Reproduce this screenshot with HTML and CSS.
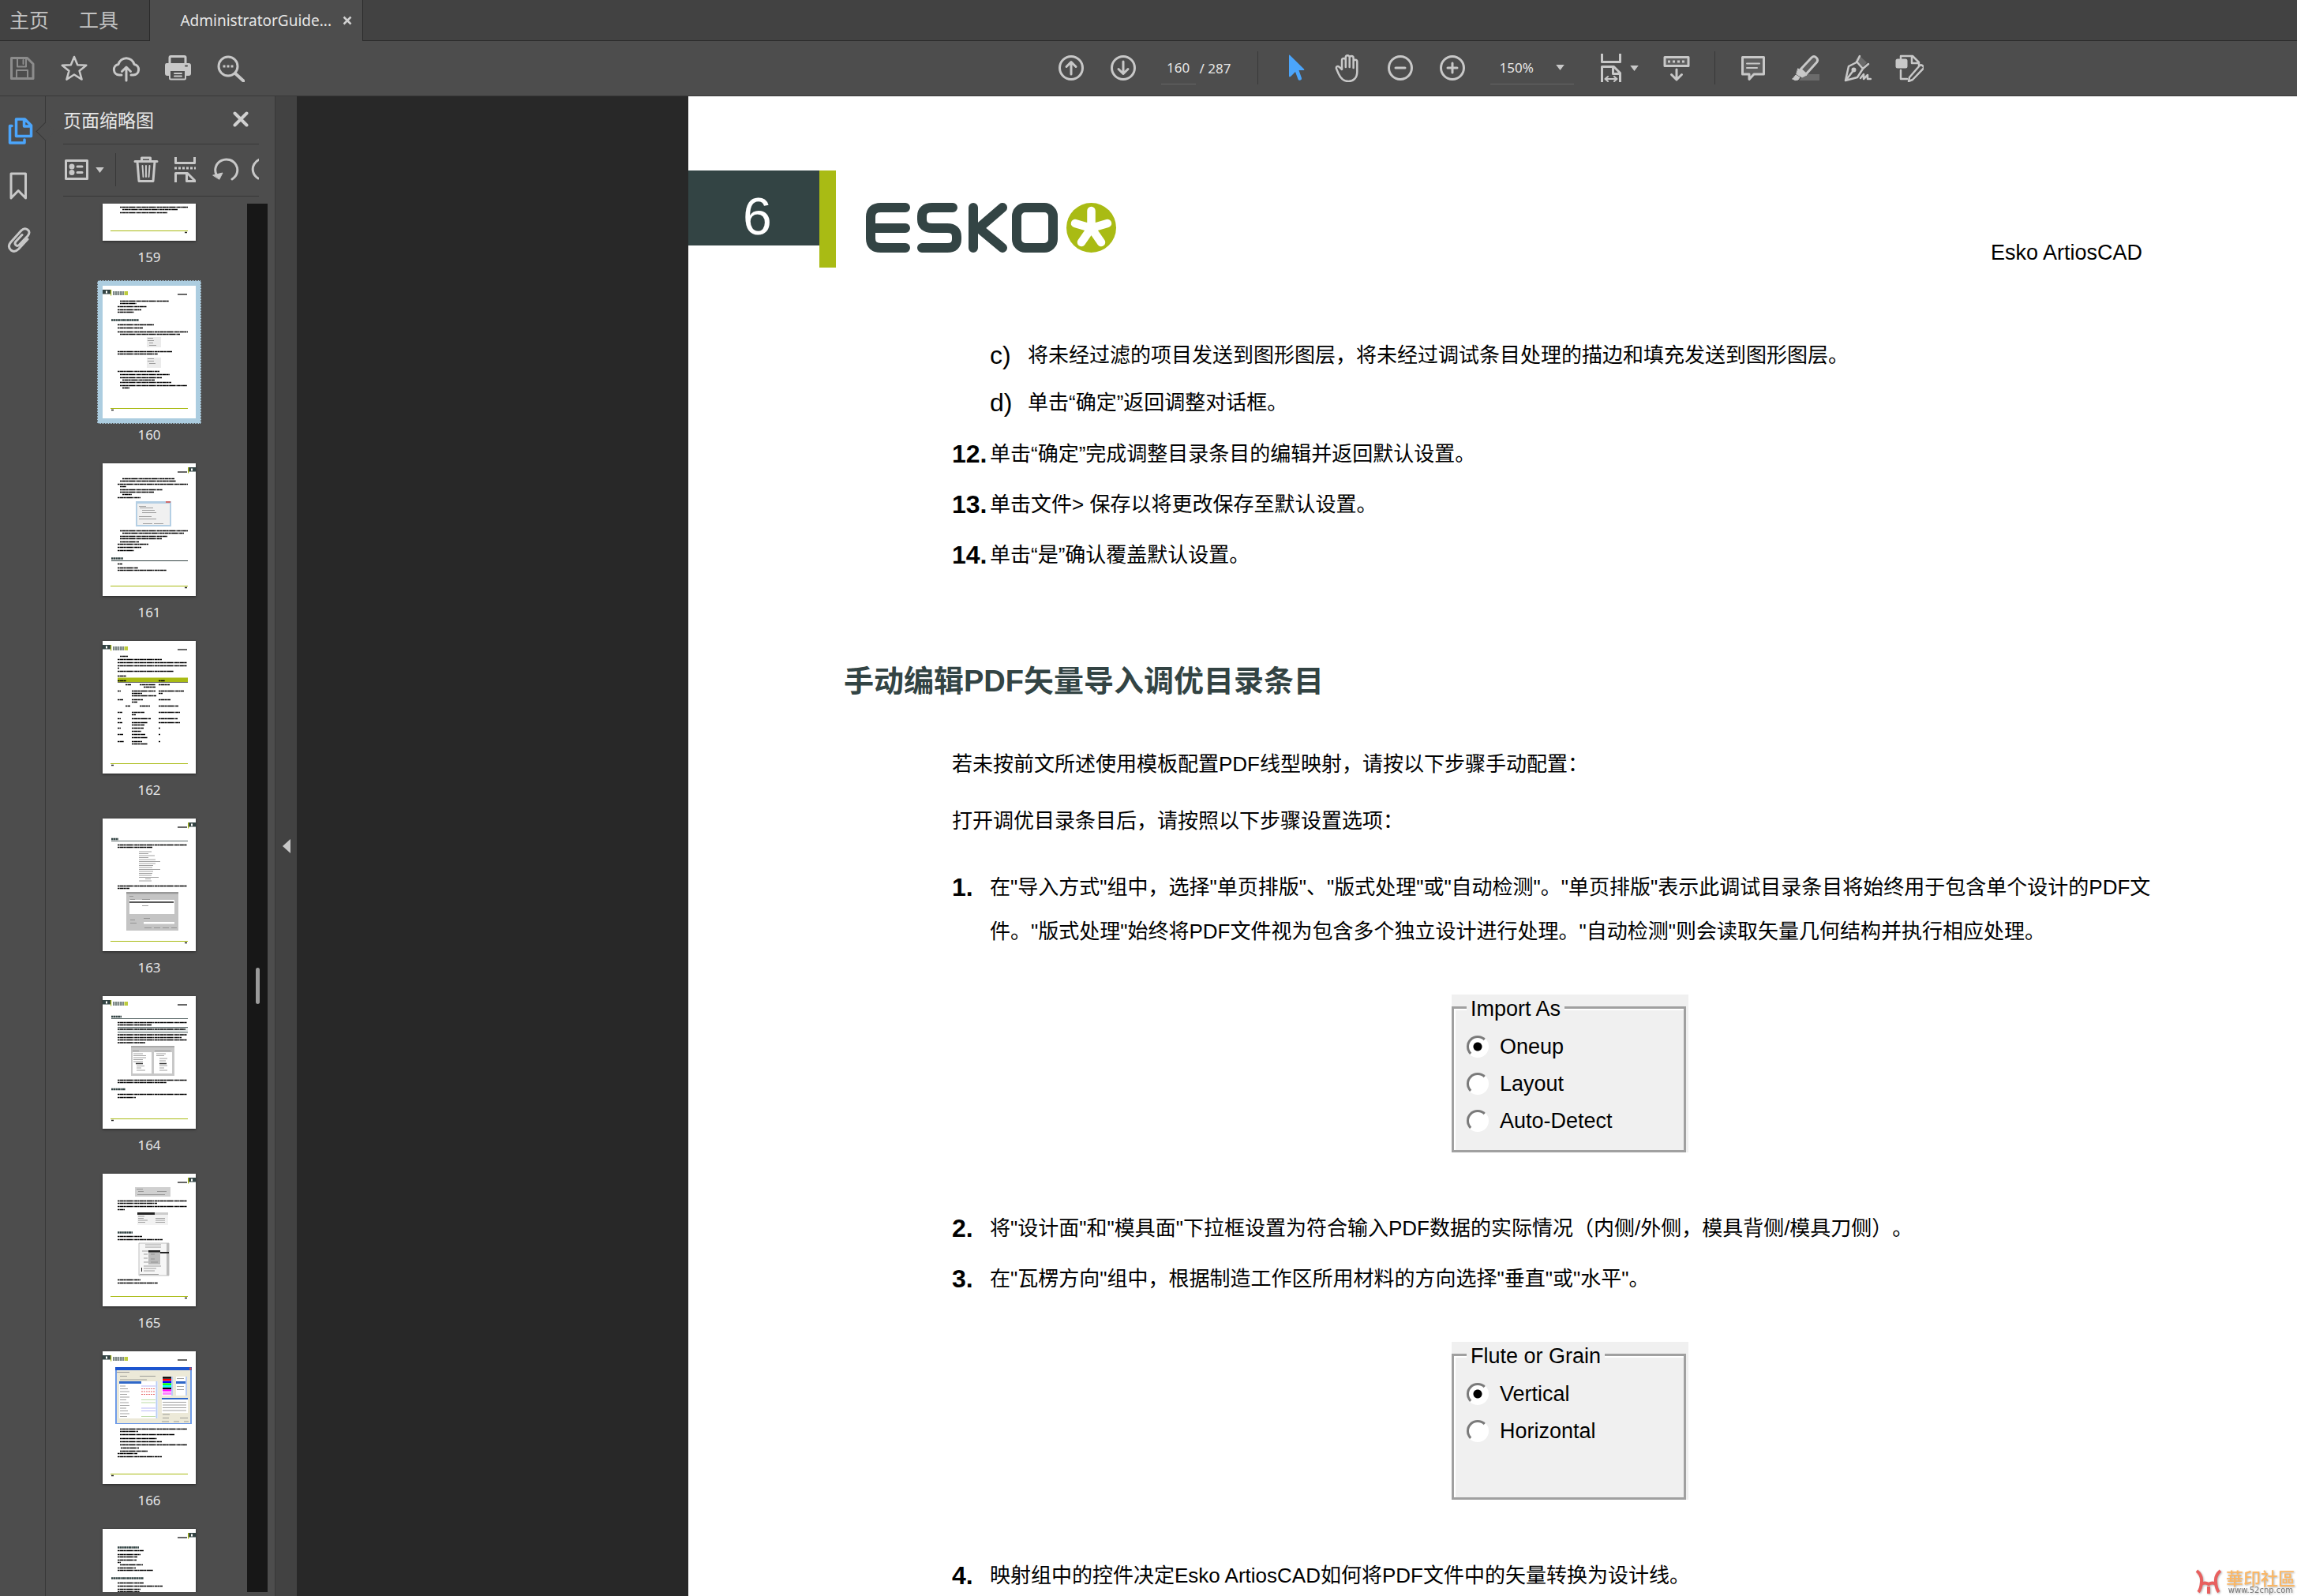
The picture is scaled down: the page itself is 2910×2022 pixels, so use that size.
FILE: index.html
```html
<!DOCTYPE html>
<html lang="zh-CN">
<head>
    <meta charset="UTF-8">
    <meta name="viewport" content="width=device-width, initial-scale=1.0">
    <title>AdministratorGuide</title>
    <link rel="stylesheet" href="styles.css">
</head>
<body>

    <!-- Shared thumbnail parts -->
    <svg class="defs" aria-hidden="true">
        <symbol id="head-left" viewBox="0 0 118 168">
            <path fill="#334444" d="M0 5h10v5.500H0z"/>
            <path fill="#fff" d="M4 6.500h2v3H4z"/>
            <path fill="#a9bb14" d="M10 5h1.200v7.500H10z"/>
            <path stroke="#7d8886" stroke-width="5" stroke-dasharray="2 .6 3 .5" d="M13 9.500h14"/>
            <path stroke="#bccb3c" stroke-width="5" d="M27.500 9.500H32"/>
            <path stroke="#000" stroke-width="1.200" d="M95 11h12"/>
        </symbol>
        <symbol id="head-right" viewBox="0 0 118 168">
            <path fill="#334444" d="M109 5h9v5.500h-9z"/>
            <path fill="#fff" d="M112 6.500h2v3h-2z"/>
            <path fill="#a9bb14" d="M108 5h1.200v7.500H108z"/>
            <path stroke="#000" stroke-width="1.200" d="M95 11h12"/>
        </symbol>
        <symbol id="foot-left" viewBox="0 0 118 168">
            <path stroke="#a9bb14" d="M10 155.500h98"/>
            <path stroke="#222" stroke-width="1.500" d="M11 157.500h3"/>
        </symbol>
        <symbol id="foot-right" viewBox="0 0 118 168">
            <path stroke="#a9bb14" d="M10 155.500h98"/>
            <path stroke="#222" stroke-width="1.500" d="M104 157.500h3"/>
        </symbol>
    </svg>

    <!-- Tabs -->
    <header class="tabbar">
        <nav class="menu">
            <a href="#">主页</a>
            <a href="#">工具</a>
        </nav>
        <div class="tab">
            <span>AdministratorGuide...</span>
            <button class="tab-close" aria-label="关闭标签">
                <svg width="12" height="12" viewBox="0 0 12 12"><path d="M1.500 1.500l9 9m0-9l-9 9" stroke="#d0d0d0" stroke-width="2.500"/></svg>
            </button>
        </div>
        <div class="tab-rest"></div>
    </header>

    <!-- Toolbar -->
    <div class="toolbar">
        <div class="tools">
            <button aria-label="保存" disabled>
                <svg class="icon dim" viewBox="0 0 36 36"><path d="M4.500 5.500h20l7.500 7.500v18.500h-27.500z"/><path d="M12 6v10.500h11V6M19.500 8v5M11 31V21h14v10" stroke-width="2"/></svg>
            </button>
            <button aria-label="收藏">
                <svg class="icon" viewBox="0 0 36 36"><path stroke-width="2.500" d="M18 4l4.200 10.300 11.100.5-8.700 7 3 10.800-9.600-6.100-9.600 6.100 3-10.800-8.700-7 11.100-.5z"/></svg>
            </button>
            <button aria-label="上传">
                <svg class="icon" viewBox="0 0 36 36"><path d="M12 27H9a6.800 6.800 0 0 1-1-13.500 10.300 10.300 0 0 1 20 0A6.800 6.800 0 0 1 27 27h-3M18 34V18M12.500 22.500L18 17l5.500 5.500"/></svg>
            </button>
            <button aria-label="打印">
                <svg class="icon" viewBox="0 0 36 36"><path d="M7 13V5q0-1.500 1.500-1.500h17Q27 3.500 27 5v8"/><path class="solid" stroke="none" d="M3 12h28q3 0 3 3v10q0 3-3 3h-3v-6H7v6H4q-3 0-3-3V15q0-3 2-3z"/><path d="M7 22v9q0 1.500 1.500 1.500h17q1.500 0 1.500-1.500v-9M13 25h9M13 28.500h9" stroke-width="2"/><path d="M27 15.500h2" stroke="#4d4d4d" stroke-width="2"/></svg>
            </button>
            <button aria-label="查找">
                <svg class="icon" viewBox="0 0 36 36"><circle cx="15" cy="16" r="12"/><path d="M24 25l11 10" stroke-width="4"/><path d="M8.500 16h3m2 0h3m2 0h3" stroke-linecap="butt"/></svg>
            </button>
        </div>

        <div class="tools">
            <button aria-label="上一页">
                <svg class="icon" viewBox="0 0 36 36"><circle cx="18" cy="18" r="14.500"/><path d="M18 26V11M12 16.500L18 10.500l6 6"/></svg>
            </button>
            <button aria-label="下一页">
                <svg class="icon" viewBox="0 0 36 36"><circle cx="18" cy="18" r="14.500"/><path d="M18 10v15M12 19.500l6 6 6-6"/></svg>
            </button>
            <div class="page-count">
                <input type="text" value="160" aria-label="页码">
                <span>/ 287</span>
            </div>
            <span class="sep"></span>
            <button aria-label="选择工具">
                <svg class="icon" viewBox="0 0 36 36"><path fill="#4ba5fb" stroke="none" d="M9 2.500q0-1.500 1.200-.5L28 19.500q1 1.500-1 1.500h-5.500l3.500 10q.3 2-1.500 2.500-2.300.8-3-1L17 23l-5.500 5.500Q9 30.500 9 28z"/></svg>
            </button>
            <button aria-label="抓手工具">
                <svg class="icon" viewBox="0 0 36 36"><path stroke-width="2.500" d="M10 20V8.500a2.400 2.400 0 0 1 4.800 0V17 4.800a2.400 2.400 0 0 1 4.900 0V17 5.500a2.400 2.400 0 0 1 4.900 0V18 10a2.300 2.300 0 0 1 4.700 0v13c0 8-5 12-11 12-7 0-10-4-12.500-9.500L3 19c-.8-2.800 2.200-4 4-1.800z"/></svg>
            </button>
            <button aria-label="缩小">
                <svg class="icon" viewBox="0 0 36 36"><circle cx="18" cy="18" r="14.500"/><path d="M12 18h12"/></svg>
            </button>
            <button aria-label="放大">
                <svg class="icon" viewBox="0 0 36 36"><circle cx="18" cy="18" r="14.500"/><path d="M12 18h12M18 12v12"/></svg>
            </button>
            <div class="zoom">
                <select aria-label="缩放">
                    <option>150%</option>
                </select>
                <svg class="caret" viewBox="0 0 12 8"><path d="M0 0h12L6 8z"/></svg>
            </div>
            <button class="wide" aria-label="适合宽度">
                <svg class="icon" viewBox="0 0 36 36"><path stroke-linecap="butt" d="M5.500 0v10.500h23V0M5.500 36V16.500h15l8 8V36M19.500 17v8.500h9"/><path stroke-width="2" d="M10 32h14M13 29l-3.500 3 3.500 3M21 29l3.500 3-3.500 3"/></svg>
                <svg class="caret" viewBox="0 0 12 8"><path d="M0 0h12L6 8z"/></svg>
            </button>
            <button aria-label="隐藏工具栏">
                <svg class="icon" viewBox="0 0 36 36"><path fill="#5f5f5f" d="M3 4.500h30v11H3z"/><path stroke-linecap="butt" stroke-dasharray="3 3" d="M7 10h22"/><path d="M18 20v12M11.500 26.500L18 33l6.500-6.500"/></svg>
            </button>
            <span class="sep"></span>
            <button aria-label="添加附注">
                <svg class="icon" viewBox="0 0 36 36"><path fill="#5f5f5f" d="M4.500 4.500h27v21.500H19l-6 6.500V26H4.500z"/><path stroke-width="2" d="M10 12.500h16M10 18h13"/></svg>
            </button>
            <button aria-label="高亮文本">
                <svg class="icon" viewBox="0 0 36 36"><path fill="#6b6b6b" stroke="none" d="M17 26h19v8H10z"/><path fill="#5f5f5f" d="M12 20L26 5q3-3 6 0t.5 6L19 26z"/><path class="solid" stroke-width="1" d="M9 19l11 8-6 3-7-4zM2 32l4-5 5 3-2 3q-4 2-7-1z"/></svg>
            </button>
            <button aria-label="签名">
                <svg class="icon" viewBox="0 0 36 36"><path fill="#6b6b6b" stroke="none" d="M20 2l10 9-5 6-9-9z"/><path stroke-width="2.500" d="M21 3l-4 8-10 5-4 18 15-4 7-11 7-6M17 10l8 9M4 33l10-13"/><circle class="solid" cx="13.500" cy="20.500" r="1.500"/><path stroke-width="2.500" d="M22 31l4-5v6l5-5v5h4"/></svg>
            </button>
            <button aria-label="更多工具">
                <svg class="icon" viewBox="0 0 36 36"><path stroke-width="2.500" d="M7 8V3h15l8 8v4M21 4v8h8M7 21v11h8"/><rect class="solid" x="2" y="8" width="12" height="9" rx="1"/><path fill="#4d4d4d" stroke-width="2.500" d="M18 30L31 15q2-1.500 4 .5t.500 3.500L22 33l-5 2z"/></svg>
            </button>
        </div>
    </div>

    <div class="workspace">
        <!-- Navigation rail -->
        <nav class="rail">
            <button class="active" aria-label="页面缩略图">
                <svg class="icon" viewBox="0 0 36 36"><path stroke="#4ba5fb" stroke-width="3.500" d="M13.500 3h11l8 8v13.500h-19zM23.500 4v8h8M8 11.500H5.500V33H24v-4"/></svg>
            </button>
            <button aria-label="书签">
                <svg class="icon" viewBox="0 0 36 36"><path d="M7 3h18.500v31L16.200 24.500 7 34z"/></svg>
            </button>
            <button aria-label="附件">
                <svg class="icon" viewBox="0 0 36 36"><path d="M28 17L16.500 29.500q-5 5-9.500 1.500-5-4.500-.5-10L20 6q4-4 8-1t0 8L17.500 24q-2.500 2.500-4.500.5t0-4.500l8-8.500"/></svg>
            </button>
        </nav>

        <!-- Thumbnails -->
        <aside class="panel">
            <div class="panel-head">
                <h2>页面缩略图</h2>
                <button aria-label="关闭面板">
                    <svg width="20" height="20" viewBox="0 0 20 20"><path d="M2.500 2.500l15 15m0-15l-15 15" stroke="#d0d0d0" stroke-width="4" stroke-linecap="round"/></svg>
                </button>
            </div>
            <div class="panel-tools">
                <button class="wide" aria-label="选项">
                    <svg class="icon" viewBox="0 0 36 36"><path d="M3.500 6.500h27v23h-27zM18 14h6M18 21.500h6"/><circle class="solid" cx="11" cy="14" r="2"/><circle class="solid" cx="11" cy="21.500" r="2"/></svg>
                    <svg class="caret" viewBox="0 0 12 8"><path d="M0 0h12L6 8z"/></svg>
                </button>
                <span class="sep"></span>
                <button aria-label="删除页面">
                    <svg class="icon" viewBox="0 0 36 36"><path d="M4 7.500h28M12.500 7V3h11v4M7 8l2 24.500h18L29 8"/><path stroke-width="2" d="M13.500 13l1 14M18 13v14M22.500 13l-1 14"/></svg>
                </button>
                <button aria-label="拆分页面">
                    <svg class="icon" viewBox="0 0 36 36"><path stroke-linecap="butt" d="M5.500 2v7.500h24V2M5.500 34V22.500h15l9 9V34M19.500 23v9.500h10"/><path stroke-linecap="butt" stroke-dasharray="3 2" d="M4 16h27"/></svg>
                </button>
                <button aria-label="逆时针旋转">
                    <svg class="icon" viewBox="0 0 36 36"><path d="M7 24a14 13.500 0 1 1 20 6"/><path class="solid" stroke-width="1" d="M3 25l12-3-4 8z"/></svg>
                </button>
                <button aria-label="顺时针旋转">
                    <svg class="icon" viewBox="0 0 36 36"><path d="M10 29a14 13.500 0 1 1 20-6"/></svg>
                </button>
            </div>
            <div class="thumbs">
                <ol class="thumb-list">
                    <li>
                        <svg viewBox="0 121 118 47" height="47">
                            <use href="#foot-right" width="118" height="168"/>
                            <path class="ln" d="M22 125.500h86M25 128.500h70M22 132.500h60"/>
                        </svg>
                        <span>159</span>
                    </li>
                    <li class="selected">
                        <svg viewBox="0 0 118 168" height="168">
                            <use href="#head-left"/><use href="#foot-left"/>
                            <path class="ln" d="M22 19.500h62M22 22.500h21M19 26.500h37M19 30.500h30M19 33.500h21M19 49.500h46M19 53.500h32M19 58.500h89M22 61.500h76M19 83.500h69M19 86.500h51M19 108.500h53M22 112.500h63M22 116.500h53M25 119.500h41M22 122.500h65M22 126.500h85M25 129.500h9"/>
                            <path class="hd" d="M11 43.500h35"/>
                            <path fill="#ebebeb" d="M56 65h18v13H56zM56 91h18v13H56z"/>
                            <path class="gr" d="M57 66.500h7M57 69.500h8M59 72.500h5M59 75.500h9M57 92.500h8M57 95.500h8M59 98.500h8"/>
                        </svg>
                        <span>160</span>
                    </li>
                    <li>
                        <svg viewBox="0 0 118 168" height="168">
                            <use href="#head-right"/><use href="#foot-right"/>
                            <path class="ln" d="M25 19.500h66M22 22.500h71M19 26.500h89M22 29.500h8M22 33.500h54M22 36.500h43M25 39.500h12M19 43.500h29M22 85.500h86M25 88.500h78M22 92.500h60M22 95.500h53M22 99.500h24M19 102.500h39M19 106.500h30M19 110.500h21M19 127.500h6M19 132.500h26M19 135.500h62"/>
                            <path fill="#b4cfe4" d="M42 48h45v32H42z"/>
                            <path fill="#f0f0f0" d="M44 51h41v27H44z"/>
                            <path fill="#d06a6a" d="M80 48h6v2h-6z"/>
                            <path class="gr" d="M46 54.500h9M47 56.500h17M50 59.500h16M50 62.500h18M46 67.500h16M46 70.500h22M51 76.500h12M65 76.500h12"/>
                            <path class="hd" d="M11 120.500h15"/>
                            <path stroke="#334444" d="M11 123.500h97"/>
                        </svg>
                        <span>161</span>
                    </li>
                    <li>
                        <svg viewBox="0 0 118 168" height="168">
                            <use href="#head-left"/><use href="#foot-left"/>
                            <path fill="#a9bb14" d="M19 46.500h89V52H19z"/>
                            <path stroke="#222" stroke-width=".7" d="M19 52.500h89"/>
                            <path class="ln" d="M22 19.500h10M19 23.500h56M19 27.500h88M19 31.500h88M19 34.500h2M19 38.500h71M19 44.500h11M19 50.500h11M71 50.500h8M29 55.500h7M47 55.500h20M71 55.500h14M52 58.500h15M19 63.500h4M37 63.500h30M71 63.500h32M37 66.500h13M71 66.500h5M37 69.500h31M19 74.500h7M37 74.500h14M71 74.500h15M37 77.500h7M29 82.500h6M47 82.500h13M71 82.500h25M19 90.500h6M37 90.500h16M71 90.500h27M37 93.500h5M19 98.500h4M37 98.500h24M71 98.500h24M19 103.500h6M37 103.500h20M71 103.500h27M37 106.500h16M19 110.500h4M37 110.500h15M71 110.500h2M37 114.500h12M19 118.500h7M37 118.500h17M71 118.500h2M37 122.500h20M19 127.500h8M37 127.500h13M71 127.500h2M37 130.500h20"/>
                        </svg>
                        <span>162</span>
                    </li>
                    <li>
                        <svg viewBox="0 0 118 168" height="168">
                            <use href="#head-right"/><use href="#foot-right"/>
                            <path class="hd" d="M11 26h9"/>
                            <path stroke="#334444" stroke-width=".8" d="M11 28.500h97"/>
                            <path class="ln" d="M19 33.500h88M19 36.500h44M19 85.500h88M19 88.500h15"/>
                            <path class="gr" d="M46 42h16M46 44.500h12M46 47h20M46 49.500h12M46 52h21M46 54.500h27M46 57h21M46 59.500h18M46 62h17M46 64.500h27M46 67h18M46 69.500h17M46 72h16M46 74.500h25M54 76.500h7M46 79h16"/>
                            <path fill="#c4c4c4" d="M30 93h66v49H30z"/>
                            <path fill="#999" d="M30 93h66v2.500H30z"/>
                            <path fill="#fff" d="M34 103h57v18H34zM52 131h39v2.500H52z"/>
                            <path stroke="#222" stroke-width="1.500" d="M34 106h56"/>
                            <path class="gr" d="M34 98.500h5M35 102.500h6M50 102.500h10M50 110.500h8M35 128.500h6M52 126.500h8M35 132.500h8M53 138.500h9M65 138.500h8M76 138.500h8M87 138.500h7"/>
                        </svg>
                        <span>163</span>
                    </li>
                    <li>
                        <svg viewBox="0 0 118 168" height="168">
                            <use href="#head-left"/><use href="#foot-left"/>
                            <path class="hd" d="M11 26h13"/>
                            <path fill="#e4e8e8" d="M19 39h89v7H19z"/>
                            <path stroke="#334444" stroke-width=".8" d="M11 28.500h97M19 39.500h89M19 46h89"/>
                            <path class="ln" d="M19 33.500h88M19 36.500h43M19 42h86M19 49h88M19 52.500h81M19 55.500h88M19 59h35M19 106.500h88M19 109.500h62M19 124.500h88M19 128.500h23"/>
                            <path class="hd" d="M11 118h18"/>
                            <path fill="#c8c8c8" d="M36 63h55v38H36z"/>
                            <path fill="#aaa" d="M36 63h55v2H36z"/>
                            <path fill="#fff" d="M38 71h24v27H38zM65 71h23v27H65z"/>
                            <path class="gr" d="M38 69.500h8M66 69.500h20M39 73h12M39 75.500h16M39 78h16M39 80.500h12M39 83h12M43 88.500h10M43 91h6M43 94h11M68 73h12M68 75.500h10M72 79h10M72 82h8M72 88h10M72 91h6M72 94h10"/>
                            <path stroke="#333" stroke-width="1.500" d="M42 85.500h9M72 85.500h9"/>
                        </svg>
                        <span>164</span>
                    </li>
                    <li>
                        <svg viewBox="0 0 118 168" height="168">
                            <use href="#head-right"/><use href="#foot-right"/>
                            <path fill="#d0d0d0" d="M41 17h45v12H41z"/>
                            <path class="gr" d="M43 19.500h8M45 22.500h7M69 22.500h12M44 26.500h35"/>
                            <path class="ln" d="M19 34.500h88M19 37.500h50M19 41.500h88M19 45.500h9M19 79.500h31M19 83.500h57M19 134.500h29M19 138.500h51"/>
                            <path fill="#f2f2f2" d="M44 49h39v16H44z"/>
                            <path fill="#222" d="M44 49h22v3H44z"/>
                            <path fill="#ccc" d="M66 49h17v3H66z"/>
                            <path class="gr" d="M45 54h8M45 56.500h7M45 59h12M45 61.500h9M67 56.500h12M67 59h12M67 61.500h12"/>
                            <path class="hd" d="M19 74.500h19"/>
                            <path fill="#f6f6f6" stroke="#999" stroke-width=".6" d="M46 88h38v41H46z"/>
                            <path class="gr" d="M54 90h20M54 93h20M50 98h8M52 102h5M52 107h5M52 112h12M52 117h22M52 120h16M52 123h14M47 127.500h24"/>
                            <path fill="#bbb" d="M58 97h15v18H58zM81 88h3v41h-3z"/>
                            <path fill="#222" d="M58 97h15v2.500H58zM73 99h11v2H73zM49 119h1v5h-1z"/>
                            <path class="gr" d="M61 102h5M61 108h5M61 112h9"/>
                        </svg>
                        <span>165</span>
                    </li>
                    <li>
                        <svg viewBox="0 0 118 168" height="168">
                            <use href="#head-left"/><use href="#foot-left"/>
                            <path fill="#6f9be8" d="M16 20h97v72H16z"/>
                            <path fill="#ece9d8" d="M18 24h93v67H18z"/>
                            <path fill="#1c55cf" d="M16 20h97v4H16z"/>
                            <path fill="#e05040" d="M110 20.500h2.500v3H110z"/>
                            <path fill="#fff" d="M21 38h49v47H21zM75 32h14v24H75zM93 32h14v24H93zM75 59h33v19H75z"/>
                            <path fill="#2f67c8" d="M21 38h28v3H21zM93 38h12v3H93zM75 59h33v2H75z"/>
                            <path stroke="#b8cdf5" stroke-width="2" d="M68.500 38v47M88 32v24M106 32v24"/>
                            <path class="gr" d="M18 26.500h16M22 31.500h9M47 31.500h20M22 36h34M22 44h7M22 47.500h10M22 51h12M22 54.500h9M22 58h12M22 61.500h8M22 65h11M22 68.500h12M22 72h8M22 75.500h10M22 79h12M22 82.500h9M94 34.500h9M94 44.500h9M94 48.500h9M76 64.500h30M76 68h30M76 71.500h30M76 75h30M76 80h9M76 84.500h8M98 84.500h10M75 89h9M90 89h7M103 89h6"/>
                            <path stroke="#8a8af0" stroke-width=".6" d="M49 44h18M49 72h18M49 75.500h18"/>
                            <path stroke="#e04040" stroke-width=".8" stroke-dasharray="2 1" d="M49 47.500h18M49 51h18M49 54.500h18"/>
                            <path stroke="#8fc46a" stroke-width=".6" d="M49 61.500h18M49 65h18M49 82.500h18"/>
                            <path stroke-width="2.500" stroke="#000" d="M76 33.500h11M76 47h11"/>
                            <path stroke-width="2.500" stroke="#f00" d="M76 36.200h11"/>
                            <path stroke-width="2.500" stroke="#00f" d="M76 38.900h11"/>
                            <path stroke-width="2.500" stroke="#0f0" d="M76 41.600h11"/>
                            <path stroke-width="2.500" stroke="#0ff" d="M76 44.300h11"/>
                            <path stroke-width="2.500" stroke="#f0f" d="M76 49.500h11"/>
                            <path stroke-width="3" stroke="#ff80ff" d="M76 53.500h11"/>
                            <path class="ln" d="M22 98.500h85M22 101.500h23M22 105.500h69M22 110.500h47M22 114.500h53M22 118.500h85M23 122.500h23M22 126.500h35M19 129.500h25M19 133.500h56"/>
                        </svg>
                        <span>166</span>
                    </li>
                    <li>
                        <svg viewBox="0 0 118 168" height="168">
                            <use href="#head-right"/><use href="#foot-right"/>
                            <path class="hd" d="M19 23.500h27M11 62.500h41"/>
                            <path class="ln" d="M19 27.500h33M19 32.500h29M19 35.500h25M19 39.500h24M19 42.500h4M22 45.500h29M19 49.500h23M19 52.500h45M19 68.500h33M19 72.500h57M19 76.500h29M19 79.500h28"/>
                        </svg>
                    </li>
                </ol>
                <div class="scroll-track"><div class="scroll-thumb"></div></div>
            </div>
        </aside>

        <button class="splitter" aria-label="折叠面板">
            <svg width="10" height="18" viewBox="0 0 10 18"><path fill="#c8c8c8" d="M10 0v18L0 9z"/></svg>
        </button>

        <!-- Document -->
        <main class="viewer">
            <article class="page">
                <header class="page-head">
                    <div class="chapter">6</div>
                    <div class="chapter-bar"></div>
                    <svg class="logo" width="320" height="66" viewBox="0 0 320 66" role="img" aria-label="ESKO">
                        <g fill="none" stroke="#334444" stroke-width="12" stroke-linecap="round">
                            <path d="M51 7H20Q7 7 7 19V46Q7 58 20 58H51M7 33H51"/>
                            <path d="M111 7H85Q72 7 72 18V22Q72 33 85 33H104Q116 33 116 44V47Q116 58 104 58H72"/>
                            <path d="M137 7V58M174 7L144 33L174 58"/>
                            <rect x="192" y="7" width="46" height="51" rx="11"/>
                        </g>
                        <circle cx="286.500" cy="32.500" r="31.500" fill="#a9bb14"/>
                        <path fill="none" stroke="#fff" stroke-width="10.500" stroke-linecap="round" d="M286.500 33V11M286.500 33L266 27M286.500 33L307 27M286.500 33L274 51M286.500 33L299 51"/>
                    </svg>
                    <span class="product">Esko ArtiosCAD</span>
                </header>

                <div class="content">
                    <ol class="sub steps">
                        <li><span class="num">c)</span><p>将未经过滤的项目发送到图形图层，将未经过调试条目处理的描边和填充发送到图形图层。</p></li>
                        <li><span class="num">d)</span><p>单击“确定”返回调整对话框。</p></li>
                    </ol>
                    <ol class="steps">
                        <li><span class="num">12.</span><p>单击“确定”完成调整目录条目的编辑并返回默认设置。</p></li>
                        <li><span class="num">13.</span><p>单击文件&gt; 保存以将更改保存至默认设置。</p></li>
                        <li><span class="num">14.</span><p>单击“是”确认覆盖默认设置。</p></li>
                    </ol>

                    <h1>手动编辑PDF矢量导入调优目录条目</h1>
                    <p class="intro">若未按前文所述使用模板配置PDF线型映射，请按以下步骤手动配置：</p>
                    <p class="intro">打开调优目录条目后，请按照以下步骤设置选项：</p>

                    <ol class="steps main-steps">
                        <li>
                            <span class="num">1.</span>
                            <div>
                                <p>在"导入方式"组中，选择"单页排版"、"版式处理"或"自动检测"。"单页排版"表示此调试目录条目将始终用于包含单个设计的PDF文件。"版式处理"始终将PDF文件视为包含多个独立设计进行处理。"自动检测"则会读取矢量几何结构并执行相应处理。</p>
                                <div class="figure">
                                    <fieldset>
                                        <legend>Import As</legend>
                                        <label><input type="radio" name="import" checked>Oneup</label>
                                        <label><input type="radio" name="import">Layout</label>
                                        <label><input type="radio" name="import">Auto-Detect</label>
                                    </fieldset>
                                </div>
                            </div>
                        </li>
                        <li><span class="num">2.</span><p>将"设计面"和"模具面"下拉框设置为符合输入PDF数据的实际情况（内侧/外侧，模具背侧/模具刀侧）。</p></li>
                        <li>
                            <span class="num">3.</span>
                            <div>
                                <p>在"瓦楞方向"组中，根据制造工作区所用材料的方向选择"垂直"或"水平"。</p>
                                <div class="figure">
                                    <fieldset>
                                        <legend>Flute or Grain</legend>
                                        <label><input type="radio" name="flute" checked>Vertical</label>
                                        <label><input type="radio" name="flute">Horizontal</label>
                                    </fieldset>
                                </div>
                            </div>
                        </li>
                        <li><span class="num">4.</span><p>映射组中的控件决定Esko ArtiosCAD如何将PDF文件中的矢量转换为设计线。</p></li>
                    </ol>
                </div>
            </article>
        </main>
    </div>

    <!-- Watermark -->
    <div class="watermark">
        <svg width="36" height="32" viewBox="0 0 36 32"><path fill="none" stroke="#e8605f" stroke-width="4" d="M3 2q7 6 6 14-.5 9-4 13M33 2q-7 6-6 14 .5 9 4 13M9 19q4-3 9 0 5-3 9 0"/><path fill="#e8605f" d="M16 22h4v9h-4z"/></svg>
        <div>
            <strong>華印社區</strong>
            <small>www.52cnp.com</small>
        </div>
    </div>

</body>
</html>
```
FILE: styles.css
```css
* {
    box-sizing: border-box;
}

body {
    margin: 0;
    height: 100vh;
    display: flex;
    flex-direction: column;
    overflow: hidden;
    background-color: #4d4d4d;
    color: #e6e6e6;
    font-family: "Noto Sans", "Noto Sans CJK SC", sans-serif;
    font-size: 17px;
}

h1, h2, p, ol {
    margin: 0;
    padding: 0;
}

ol {
    list-style: none;
}

button {
    display: flex;
    align-items: center;
    justify-content: center;
    flex: none;
    padding: 0;
    border: none;
    background: none;
    cursor: pointer;
}

.defs {
    position: absolute;
    width: 0;
    height: 0;
}

/* Icons */
.icon {
    width: 36px;
    height: 36px;
    flex: none;
    fill: none;
    stroke: #c8c8c8;
    stroke-width: 3;
    stroke-linecap: round;
    stroke-linejoin: round;
}

.icon .solid {
    fill: #c8c8c8;
}

.icon.dim {
    stroke: #8c8c8c;
}

.caret {
    width: 11px;
    height: 7px;
    fill: #c8c8c8;
}

.sep {
    width: 1px;
    height: 42px;
    flex: none;
    background-color: #383838;
}

.wide {
    width: 52px;
    justify-content: space-between;
}

/* Tab bar */
.tabbar {
    display: flex;
    height: 52px;
    flex: none;
}

.menu {
    display: flex;
    gap: 38px;
    width: 190px;
    padding: 0 0 2px 12px;
    align-items: center;
    background-color: #424242;
    border-right: 1px solid #2b2b2b;
    border-bottom: 1px solid #2b2b2b;
}

.menu a {
    color: #c3c3c3;
    font-size: 25px;
    line-height: 48px;
    text-decoration: none;
}

.tab {
    display: flex;
    align-items: center;
    justify-content: flex-end;
    gap: 14px;
    width: 269px;
    padding-right: 13px;
    font-size: 19px;
}

.tab-rest {
    flex: 1;
    background-color: #424242;
    border-left: 1px solid #2b2b2b;
    border-bottom: 1px solid #2b2b2b;
}

/* Toolbar */
.toolbar {
    display: grid;
    grid-template-columns: 46% 1fr;
    height: 70px;
    padding-bottom: 1px;
    flex: none;
    border-bottom: 1px solid #383838;
}

.tools {
    display: flex;
    align-items: center;
    gap: 30px;
}

.tools:first-child {
    padding-left: 10px;
}

.page-count {
    display: flex;
    align-items: center;
    gap: 5px;
    width: 92px;
}

.page-count input,
.zoom {
    height: 42px;
    border: none;
    border-bottom: 1px solid #666;
}

.page-count input {
    width: 44px;
    padding: 0;
    background: none;
    color: inherit;
    font: inherit;
    text-align: center;
}

.zoom {
    display: flex;
    align-items: center;
    width: 106px;
    padding: 0 12px;
}

.zoom select {
    flex: 1;
    padding: 0;
    border: none;
    appearance: none;
    background: none;
    color: inherit;
    font: inherit;
}

/* Workspace */
.workspace {
    display: flex;
    flex: 1;
    min-height: 0;
}

.rail {
    position: relative;
    display: flex;
    flex-direction: column;
    gap: 33px;
    width: 58px;
    padding: 26px 0 0 7px;
    align-items: flex-start;
    border-right: 1px solid #383838;
}

/* Notch at the open panel */
.rail::after {
    content: "";
    position: absolute;
    top: 36px;
    right: -9px;
    width: 16px;
    height: 16px;
    background-color: #4d4d4d;
    border-left: 1px solid #383838;
    border-bottom: 1px solid #383838;
    transform: rotate(45deg);
}

.panel {
    display: flex;
    flex-direction: column;
    width: 290px;
    padding: 0 9px 5px 22px;
}

.panel-head,
.panel-tools {
    display: flex;
    align-items: center;
    margin-right: 11px;
    border-bottom: 1px solid #383838;
}

.panel-head {
    justify-content: space-between;
    height: 61px;
    padding: 0 13px 3px 0;
}

.panel-head h2 {
    font-size: 23px;
    font-weight: normal;
}

.panel-tools {
    gap: 14px;
    height: 66px;
    padding-bottom: 1px;
    overflow: hidden;
}

.panel-tools .sep {
    margin-right: 6px;
}

.thumbs {
    display: flex;
    flex: 1;
    min-height: 0;
    margin-top: 9px;
    justify-content: space-between;
}

.thumb-list {
    flex: 1;
    padding-left: 50px;
    overflow: hidden;
}

.thumb-list li {
    width: 118px;
}

.thumb-list svg {
    display: block;
    width: 118px;
    background-color: #fff;
    box-shadow: 0 1px 3px rgba(0, 0, 0, 0.5);
}

.thumb-list span {
    display: block;
    height: 57px;
    line-height: 42px;
    text-align: center;
}

.thumb-list .selected svg {
    outline: 1px dotted #4d4d4d;
    outline-offset: 6px;
    box-shadow: 0 0 0 7px #accde0;
}

.ln {
    stroke: #000;
    stroke-width: 1.5;
    stroke-dasharray: 2 .4 5 .3 3 .5 8 .4 1 .6 4 .3;
}

.hd {
    stroke: #334444;
    stroke-width: 2.5;
    stroke-dasharray: 2 .4 3 .4;
}

.gr {
    stroke: #888;
    stroke-width: .8;
}

.scroll-track {
    display: flex;
    flex-direction: column;
    align-items: center;
    width: 26px;
    padding-top: 968px;
    background-color: #171717;
}

.scroll-thumb {
    width: 5px;
    height: 46px;
    border-radius: 3px;
    background-color: #9b9b9b;
}

.splitter {
    width: 28px;
    background-color: #424242;
    border-left: 1px solid #383838;
}

/* Document */
.viewer {
    display: flex;
    flex: 1;
    min-width: 0;
    padding-left: 496px;
    overflow: hidden;
    background-color: #282828;
}

.page {
    flex: 1;
    min-width: 0;
    padding-top: 94px;
    background-color: #fff;
    color: #000;
    font-family: "Liberation Sans", "Noto Sans CJK SC", sans-serif;
    font-size: 26px;
    line-height: 56px;
    text-spacing-trim: space-all;
}

.page-head {
    display: flex;
    height: 123px;
    padding-right: 196px;
}

.chapter {
    width: 166px;
    height: 95px;
    padding: 10px 0 0 69px;
    background-color: #334444;
    color: #fff;
    font-size: 66px;
    line-height: 96px;
}

.chapter-bar {
    width: 21px;
    background-color: #a9bb14;
}

.logo {
    margin: 40px 0 0 37px;
}

.product {
    margin: 76px 0 0 auto;
    font-size: 27px;
}

.content {
    padding: 83px 160px 0 334px;
}

.steps {
    display: flex;
    flex-direction: column;
    gap: 8px;
}

.steps li {
    display: grid;
    grid-template-columns: 48px 1fr;
}

.num {
    font-size: 32px;
    font-weight: bold;
}

.sub {
    gap: 4px;
    margin: 0 0 9px 48px;
}

.sub .num {
    font-weight: normal;
}

.content h1 {
    margin: 104px 0 49px -137px;
    color: #334444;
    font-size: 38px;
    line-height: 56px;
}

.intro {
    margin-bottom: 16px;
}

.main-steps {
    margin-top: 28px;
}

.figure {
    width: 300px;
    height: 200px;
    margin: 52px auto 60px;
    padding-right: 3px;
    background-color: #f0f0f0;
}

.main-steps li > div {
    padding-right: 26px;
}

.main-steps li > div > p {
    margin-right: -26px;
}

fieldset {
    height: 200px;
    margin: 0;
    padding: 10px 0 0 16px;
    border: 3px solid #a0a0a0;
    box-shadow: inset 2px 2px #fff;
    font-size: 27px;
    line-height: 32px;
}

legend {
    padding: 4px 5px 0;
    background-color: #f0f0f0;
    line-height: 28px;
}

fieldset label {
    display: flex;
    align-items: center;
    gap: 14px;
    height: 47px;
}

fieldset input {
    width: 28px;
    height: 28px;
    margin: 0;
    appearance: none;
    border: 3px solid;
    border-color: #7a7a7a #fff #fff #7a7a7a;
    border-radius: 50%;
    background-color: #fff;
}

fieldset input:checked {
    background-image: radial-gradient(circle, #000 5px, #fff 6px);
}

/* Watermark */
.watermark {
    position: absolute;
    right: 2px;
    bottom: 1px;
    display: flex;
    align-items: center;
    gap: 4px;
    filter: drop-shadow(1px 1px 1px rgba(0, 0, 0, 0.3));
}

.watermark div {
    display: flex;
    flex-direction: column;
}

.watermark strong {
    color: #fbb765;
    font-family: "Noto Sans CJK TC", sans-serif;
    font-size: 22px;
    font-weight: 500;
    line-height: 22px;
}

.watermark small {
    color: #777;
    font-family: "DejaVu Sans", sans-serif;
    font-size: 10px;
    line-height: 12px;
    text-align: center;
}
```
